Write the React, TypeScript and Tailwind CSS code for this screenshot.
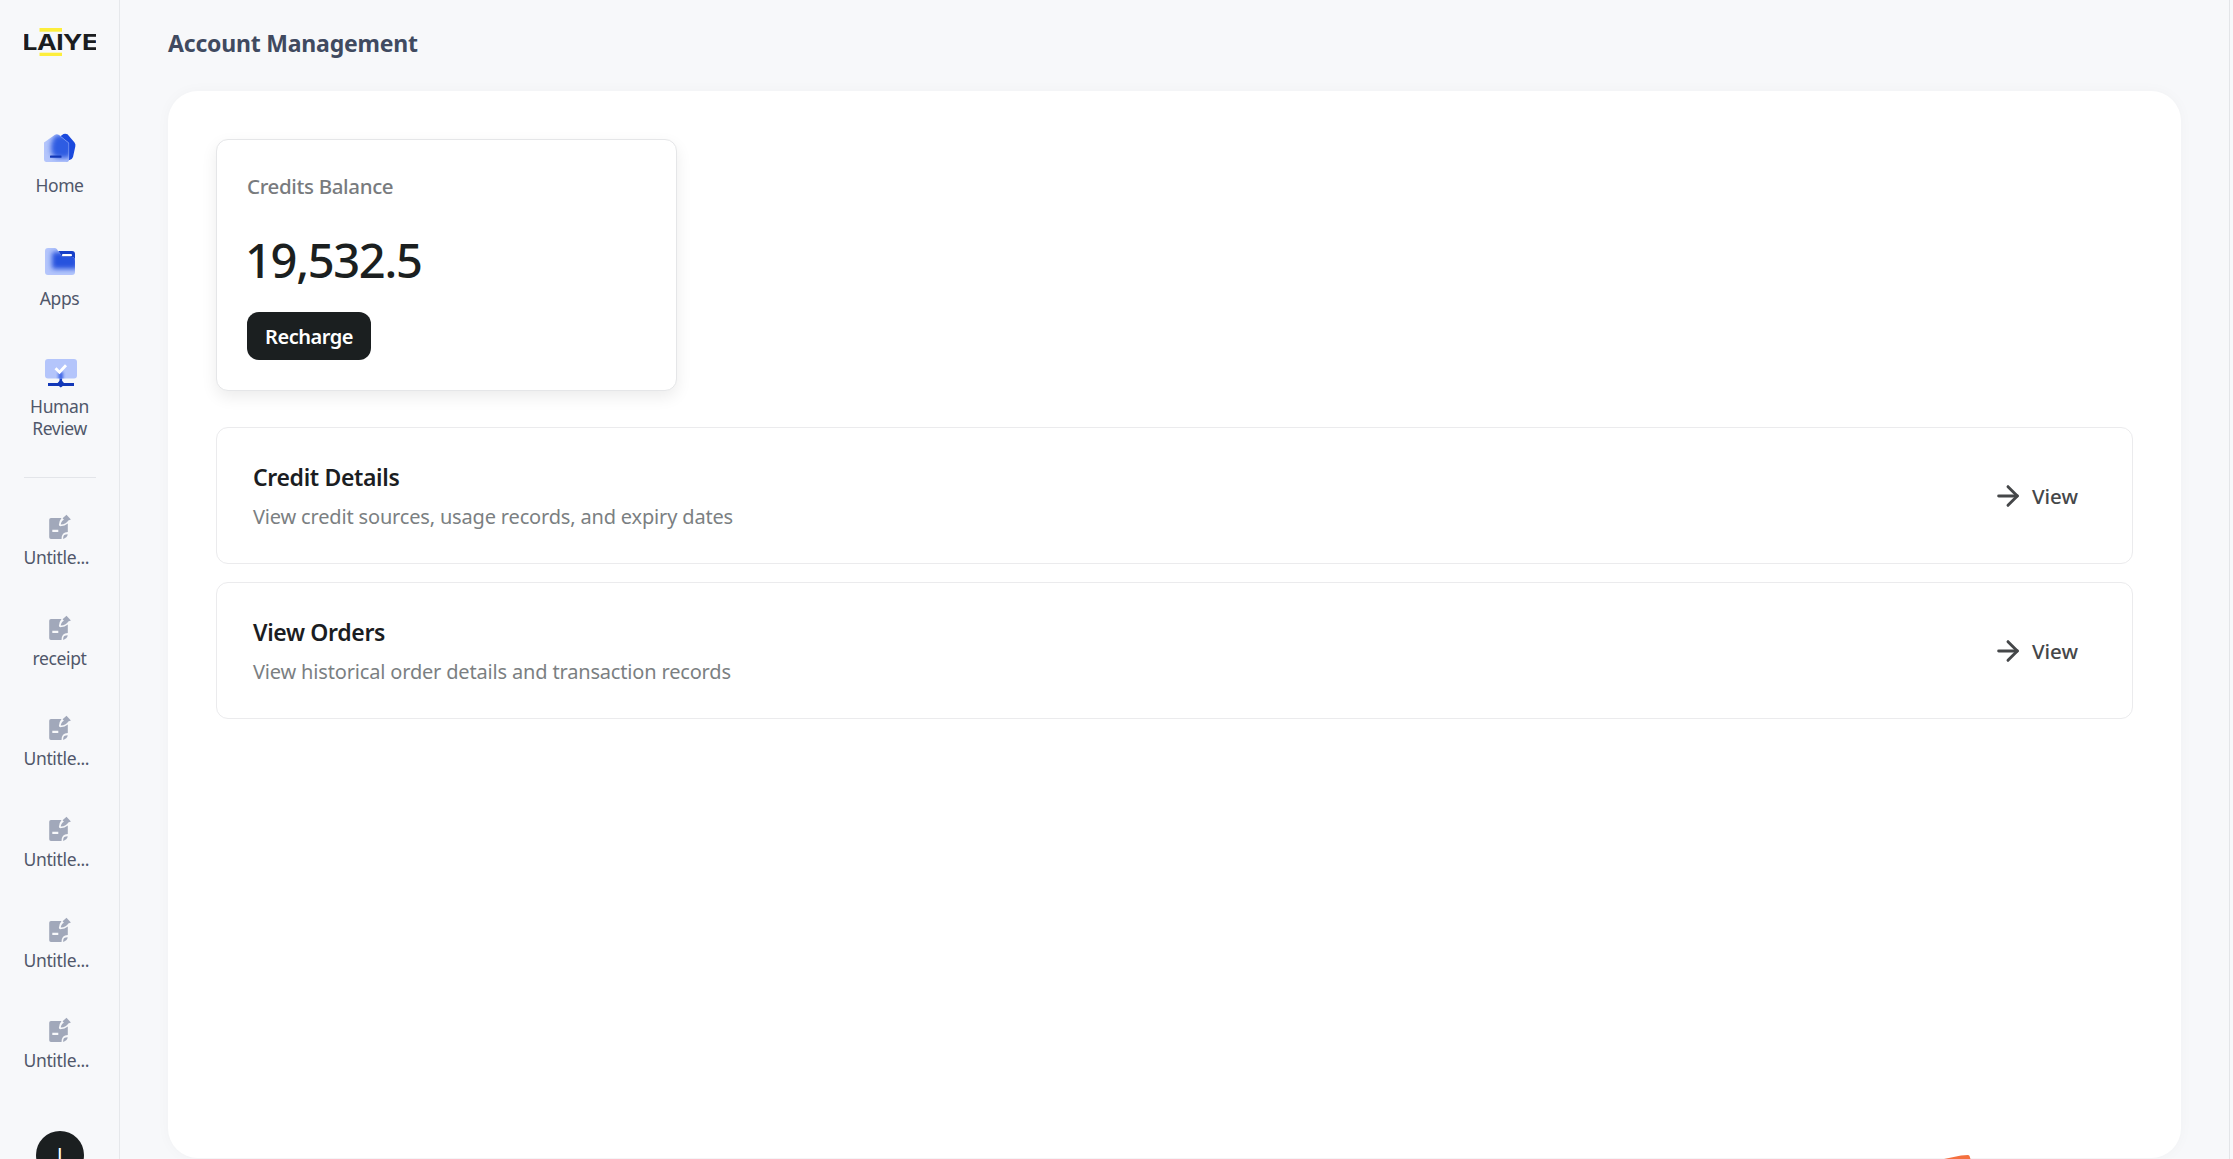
import { ArrowRight } from "lucide-react"

function LaiyeLogo() {
  return (
    <svg className="h-7 w-[72px] shrink-0" viewBox="0 0 72 28">
      <rect x="15.5" y="0" width="22.5" height="3.7" fill="#fdee3c" />
      <rect x="15.5" y="24.7" width="22.5" height="3.3" fill="#fdee3c" />
      <text
        x="-1.5"
        y="22"
        textLength="75"
        lengthAdjust="spacingAndGlyphs"
        fill="#1b1d1f"
        className="font-['Inter',sans-serif] text-[22px] font-bold"
      >
        LAIYE
      </text>
    </svg>
  )
}

function HomeIcon() {
  return (
    <svg className="size-9" viewBox="0 0 36 36">
      <defs>
        <filter id="homeBlur" x="-50%" y="-50%" width="200%" height="200%">
          <feGaussianBlur stdDeviation="2.6" />
        </filter>
        <clipPath id="homeClip">
          <path d="M2 12.5 13 4.8q1.8-1 3.6 0L27 13v16.5q0 2.5-2.5 2.5h-20Q2 32 2 29V12.500Z" />
        </clipPath>
      </defs>
      <path d="M18 6.500 21.500 4q2-.8 4 .3l7 8.200q1.400 1.800.8 4L31 27q-.8 2.500-3.500 3L18 30Z" fill="#1a49dd" />
      <g clipPath="url(#homeClip)">
        <rect width="36" height="36" fill="#b4c5fb" />
        <path d="M14 5h14l5 12-6 11H15q-6-2-6-10t5-13Z" fill="#2f5ce2" filter="url(#homeBlur)" />
      </g>
      <path d="M17 5 26.700 13v16q0 2-2 2.500" fill="none" stroke="#8da8f6" strokeWidth=".6" />
      <rect x="8" y="25.500" width="11.500" height="2.200" rx=".5" fill="#1338b8" />
    </svg>
  )
}

function AppsIcon() {
  return (
    <svg className="size-9" viewBox="0 0 36 36">
      <defs>
        <filter id="appsBlur" x="-50%" y="-50%" width="200%" height="200%">
          <feGaussianBlur stdDeviation="2.4" />
        </filter>
        <clipPath id="appsClip">
          <path d="M6 5h6.500q1.500 0 2.500 1.300L16 8h0.500l3 5q.6 1 2.500 1H30q3 0 3 4v11q0 3-3 3H6q-3 0-3-3V8q0-3 3-3Z" />
        </clipPath>
      </defs>
      <path d="M16 8h14q3 0 3 3v8l-3-4H20Z" fill="#1740c8" />
      <g clipPath="url(#appsClip)">
        <rect width="36" height="36" fill="#b4c5fb" />
        <rect x="10" y="9" width="26" height="17" rx="2" fill="#2553de" filter="url(#appsBlur)" />
      </g>
      <rect x="20" y="11" width="10" height="2.300" rx="1" fill="#fff" />
    </svg>
  )
}

function HumanReviewIcon() {
  return (
    <svg className="size-9" viewBox="0 0 36 36">
      <defs>
        <filter id="reviewBlur" x="-50%" y="-50%" width="200%" height="200%">
          <feGaussianBlur stdDeviation="1.6" />
        </filter>
        <clipPath id="reviewClip">
          <rect x="3" y="4" width="32" height="19.500" rx="3" />
        </clipPath>
      </defs>
      <rect x="17.500" y="22" width="2.600" height="6" fill="#1740c8" />
      <g clipPath="url(#reviewClip)">
        <rect width="36" height="36" fill="#b4c5fb" />
        <rect x="16.500" y="17" width="4.500" height="9" fill="#3a62e6" filter="url(#reviewBlur)" />
      </g>
      <path d="m13.500 13.300 4 3.900 6.500-7" fill="none" stroke="#fff" strokeWidth="2.800" />
      <rect x="6" y="28" width="26" height="3" fill="#1338b8" />
      <path d="M18.800 24.500 22 28v2l-3.200 2.600L15.600 30v-2Z" fill="#1338b8" />
    </svg>
  )
}

function DocumentIcon() {
  return (
    <svg className="size-7 text-[#a1a8ba]" viewBox="0 0 28 28" fill="currentColor">
      <path
        fillRule="evenodd"
        d="M5 5h10.500q-2.300 2.800-2.600 6.800 0 1.400 1.400 1.400 4.600-.2 7.500-2.700V19q-6.300 0-6.300 7H5q-1.800 0-1.800-1.800V6.800Q3.200 5 5 5Zm1.300 11.700v2.200h6v-2.200Z"
      />
      <path d="M20.500 1.800 24.900 6.500 22.300 7.400Q20.500 11 14.800 11.600 15 8 17.900 6.700L16.600 5.200Z" />
      <path d="M17.200 25.900v-1.500q0-3.100 4.500-3.100-.2 3.200-4.500 4.600Z" />
    </svg>
  )
}

const navItems = [
  { label: "Home", icon: HomeIcon, className: "mt-[74px] gap-2" },
  { label: "Apps", icon: AppsIcon, className: "mt-[47px] gap-2" },
  { label: "Human Review", icon: HumanReviewIcon, className: "mt-[46px] gap-1" },
]

const recentApps = ["Untitle...", "receipt", "Untitle...", "Untitle...", "Untitle...", "Untitle..."]

const sections = [
  { title: "Credit Details", description: "View credit sources, usage records, and expiry dates" },
  { title: "View Orders", description: "View historical order details and transaction records" },
]

function Sidebar() {
  return (
    <aside className="flex w-[120px] shrink-0 flex-col items-center overflow-hidden border-r border-[#e6e8eb] pt-7 text-[17.5px] leading-[22px] tracking-[-0.4px] text-[#50576a]">
      <LaiyeLogo />
      {navItems.map((item) => (
        <div key={item.label} className={`flex w-[76px] shrink-0 flex-col items-center text-center ${item.className}`}>
          <item.icon />
          <span>{item.label}</span>
        </div>
      ))}
      <div className="mt-[38px] h-px w-[72px] shrink-0 bg-[#e3e5e9]" />
      <div className="mt-[35px] flex w-[72px] shrink-0 flex-col gap-[45.7px]">
        {recentApps.map((name, i) => (
          <div key={i} className="flex flex-col items-center gap-[5px]">
            <DocumentIcon />
            <span className={name === "receipt" ? "" : "w-full tracking-[-0.35px]"}>{name}</span>
          </div>
        ))}
      </div>
      <div className="mt-[60px] flex size-12 shrink-0 items-center justify-center rounded-full bg-[#1b1f20] font-['Liberation_Sans',sans-serif] text-xl text-white">
        I
      </div>
    </aside>
  )
}

function CreditsCard() {
  return (
    <div className="flex h-[252px] w-[461px] flex-col items-start rounded-xl border border-[#e5e6e8] bg-white pt-[31px] pl-[30px] shadow-[0_6px_16px_rgba(0,0,0,0.08)]">
      <p className="text-[20.5px] leading-[30px] font-medium tracking-[-0.35px] text-[#787b7e]">Credits Balance</p>
      <p className="mt-[29px] -ml-0.5 text-[47px] leading-[60px] font-medium tracking-[-1.3px] text-[#1b1f20]">19,532.5</p>
      <button className="mt-[22px] h-12 w-[124px] rounded-xl bg-[#1b1f20] pt-0.5 text-[20px] font-semibold tracking-[-0.5px] text-white">
        Recharge
      </button>
    </div>
  )
}

export default function App() {
  return (
    <div className="flex h-screen overflow-hidden bg-[#f7f8fa] font-['Noto_Sans',sans-serif]">
      <Sidebar />
      <main className="relative flex min-w-0 flex-1 flex-col overflow-hidden border-r border-[#e3e5e8] px-12">
        <h1 className="h-[91px] shrink-0 pt-[27px] text-[23px] leading-8 font-bold tracking-[-0.2px] text-[#404a60]">
          Account Management
        </h1>
        <div className="h-[1067px] shrink-0 rounded-[30px] bg-white p-12 shadow-[0_0_14px_rgba(0,0,0,0.03)]">
          <CreditsCard />
          <div className="mt-9 flex flex-col gap-[18px]">
            {sections.map((section) => (
              <div
                key={section.title}
                className="flex h-[137px] items-center justify-between rounded-xl border border-[#ebebed] pr-[54px] pl-9"
              >
                <div className="flex flex-col gap-2 pt-0.5">
                  <h2 className="text-[23px] leading-8 font-semibold tracking-[-0.35px] text-[#1b1d22]">{section.title}</h2>
                  <p className="text-[20px] leading-8 tracking-[-0.17px] text-[#7b7f82]">{section.description}</p>
                </div>
                <button className="flex items-center gap-2 text-[20.5px] font-medium text-[#454749]">
                  <ArrowRight className="size-8" strokeWidth={2.2} />
                  <span className="pt-0.5">View</span>
                </button>
              </div>
            ))}
          </div>
        </div>
        <svg className="absolute right-[258px] bottom-0 h-1 w-[27px]" viewBox="0 0 27 4">
          <path d="M0 4 17 .4 24 0q1.500 0 1.700 1.500L26.500 4Z" fill="#f4703f" />
        </svg>
      </main>
      <div className="w-[3px] shrink-0" />
    </div>
  )
}
